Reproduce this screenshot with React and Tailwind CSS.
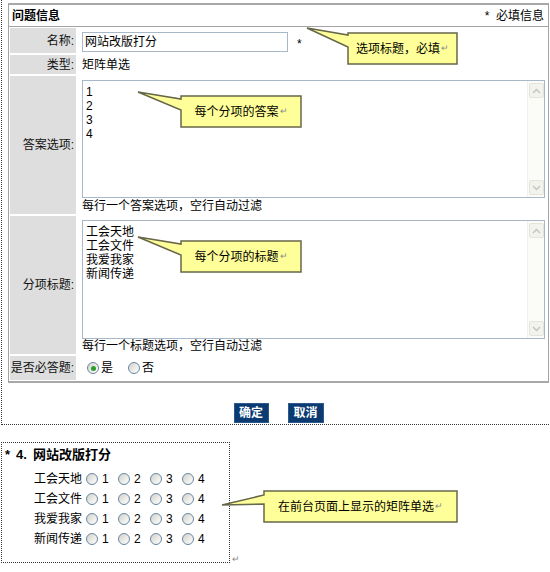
import React from 'react';

const answers = ['1', '2', '3', '4'];
const subjects = ['工会天地', '工会文件', '我爱我家', '新闻传递'];

// yellow note boxes: box = [left, top, right, bottom], tail attaches on the left edge between ya/yb
const notes = [
  { box: [348, 33, 457, 64], tip: [307, 28], attach: [35, 47], text: '选项标题，必填' },
  { box: [181, 96, 301, 127], tip: [138, 92], attach: [99, 110], text: '每个分项的答案' },
  { box: [181, 241, 301, 272], tip: [138, 237], attach: [244, 255], text: '每个分项的标题' },
  { box: [264, 491, 457, 522], tip: [222, 505], attach: [495, 504], text: '在前台页面上显示的矩阵单选' },
];

function ScrollArrow({ up }) {
  return (
    <div className="w-[15px] h-[15px] bg-[#f3f3ee] border border-[#e4e4dc] rounded-[2px] flex items-center justify-center">
      <svg width="9" height="6" viewBox="0 0 9 6">
        <polyline
          points={up ? '1,5 4.5,1.5 8,5' : '1,1 4.5,4.5 8,1'}
          fill="none"
          stroke="#c6c6be"
          strokeWidth="1.5"
        />
      </svg>
    </div>
  );
}

function TextBox({ lines, className }) {
  return (
    <div className={`flex w-[463px] border border-[#a9b8c9] bg-white ${className}`}>
      <div className="flex-1 pl-[3px] pt-[4px] text-[12px] leading-[14px] text-black">
        {lines.map((l) => (
          <div key={l}>{l}</div>
        ))}
      </div>
      <div className="w-[17px] flex flex-col justify-between items-center py-[2px] bg-[#fbfbf8] border-l border-[#f1f1ec]">
        <ScrollArrow up />
        <ScrollArrow />
      </div>
    </div>
  );
}

function Radio({ checked }) {
  return (
    <span className="inline-flex w-[12px] h-[12px] rounded-full border border-[#6a86a3] bg-linear-to-br from-[#d3d3cb] to-white items-center justify-center">
      {checked && <span className="w-[5px] h-[5px] rounded-full bg-[#2e9d2e]" />}
    </span>
  );
}

function Label({ children }) {
  return (
    <div className="bg-[#dedede] flex items-center justify-end pr-[2px] text-[#111]">
      {children}
    </div>
  );
}

function Notes() {
  return (
    <>
      <svg className="absolute inset-0 pointer-events-none" width="550" height="572">
        {notes.map(({ box: [x1, y1, x2, y2], tip: [tx, ty], attach: [ya, yb] }) => (
          <polygon
            key={x1 + '-' + y1}
            points={`${x1},${y1} ${x2},${y1} ${x2},${y2} ${x1},${y2} ${x1},${yb} ${tx},${ty} ${x1},${ya}`}
            fill="#ffff99"
            stroke="#67674a"
            strokeWidth="1.5"
          />
        ))}
      </svg>
      {notes.map(({ box: [x1, y1, x2, y2], text }) => (
        <div
          key={text}
          className="absolute flex items-center justify-center text-[12px] text-black"
          style={{ left: x1, top: y1, width: x2 - x1, height: y2 - y1 }}
        >
          {text}
          <span className="text-[9px] text-[#8a8a8a] ml-px">↵</span>
        </div>
      ))}
    </>
  );
}

export default function App() {
  return (
    <div className="relative w-[550px] h-[572px] overflow-hidden bg-white text-[12px] text-black font-['Liberation_Sans','Noto_Sans_CJK_SC',sans-serif]">
      {/* question editor */}
      <div className="ml-[1px] w-[560px] border-l border-b border-dotted border-[#333] pt-[3px] pl-[6px] pb-px">
        <div className="w-[541px] border-x border-[#a3a3a3] border-t-2 border-b-2 border-t-[#a8a8a8] border-b-[#a8a8a8]">
          <div className="h-[22px] flex items-center justify-between pl-[3px] pr-[4px] border-b border-[#a3a3a3]">
            <span className="font-bold">问题信息</span>
            <span>*&nbsp; 必填信息</span>
          </div>

          <div className="grid grid-cols-[66px_1fr] grid-rows-[25px_19px_138px_138px_24px] gap-[2px] p-[1px]">
            <Label>名称:</Label>
            <div className="flex items-start pl-[4px] pt-[4px]">
              <div className="w-[206px] h-[20px] border border-[#a9b8c9] flex items-center pl-[2px]">
                网站改版打分
              </div>
              <span className="ml-[9px] mt-[3px]">*</span>
            </div>

            <Label>类型:</Label>
            <div className="flex items-center pl-[4px]">矩阵单选</div>

            <Label>答案选项:</Label>
            <div className="pl-[4px] pt-[4px]">
              <TextBox lines={answers} className="h-[118px]" />
              <div className="mt-[1px] leading-[14px]">每行一个答案选项，空行自动过滤</div>
            </div>

            <Label>分项标题:</Label>
            <div className="pl-[4px] pt-[4px]">
              <TextBox lines={subjects} className="h-[119px]" />
              <div className="leading-[14px]">每行一个标题选项，空行自动过滤</div>
            </div>

            <Label>是否必答题:</Label>
            <div className="flex items-center pl-[9px]">
              <Radio checked />
              <span className="ml-[2px]">是</span>
              <span className="ml-[15px] flex">
                <Radio />
              </span>
              <span className="ml-[2px]">否</span>
            </div>
          </div>
        </div>

        <div className="flex justify-center gap-[19px] mt-[20px] w-[541px]">
          <button className="w-[35px] h-[20px] bg-[#0b3b71] border border-[#2d5a8c] text-white font-bold text-[12px] leading-none">
            确定
          </button>
          <button className="w-[36px] h-[20px] bg-[#0b3b71] border border-[#2d5a8c] text-white font-bold text-[12px] leading-none">
            取消
          </button>
        </div>
      </div>

      {/* front-end preview of the matrix question */}
      <div className="flex items-end mt-[17px] ml-[1px]">
        <div className="w-[229px] h-[121px] border border-dotted border-[#333] pt-[4px]">
          <div className="h-[16px] flex items-center font-bold text-[13px] pl-[3px]">
            <span>*</span>
            <span className="ml-[6px]">4.</span>
            <span className="ml-[6px]">网站改版打分</span>
          </div>
          <div className="mt-[6px] pl-[32px]">
            {subjects.map((s) => (
              <div key={s} className="h-[20px] flex items-center">
                <span className="w-[52px]">{s}</span>
                {answers.map((a) => (
                  <span key={a} className="w-[32px] flex items-center">
                    <Radio />
                    <span className="ml-[4px]">{a}</span>
                  </span>
                ))}
              </div>
            ))}
          </div>
        </div>
        <span className="text-[9px] text-[#8a8a8a] ml-[2px] mb-[-3px]">↵</span>
      </div>

      <Notes />
    </div>
  );
}
